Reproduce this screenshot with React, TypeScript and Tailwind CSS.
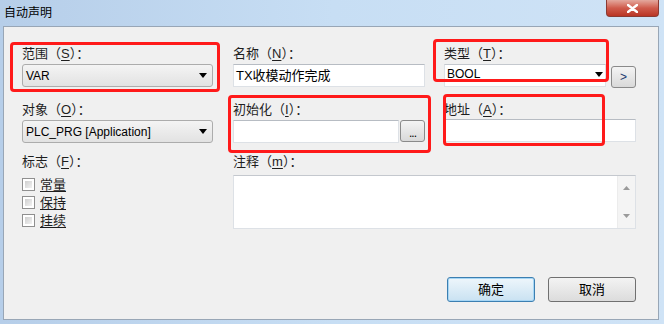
const cjk = "font-['Liberation_Sans','Noto_Sans_CJK_SC',sans-serif]";

function Label({ text, hot }: { text: string; hot: string }) {
  return (
    <div className="h-[17px] text-[13px] leading-[17px] text-[#1e1e1e] whitespace-nowrap">
      {text}（<span className="underline underline-offset-2">{hot}</span>）：
    </div>
  );
}

function Arrow() {
  return (
    <svg width="8" height="5" viewBox="0 0 8 5" className="shrink-0">
      <path d="M0 0h8L4 5z" fill="#000" />
    </svg>
  );
}

function GrayCombo({ value }: { value: string }) {
  return (
    <div className="flex items-center justify-between h-[23px] rounded-[3px] border border-[#acacac] bg-linear-to-b from-[#f4f4f4] to-[#e2e2e2] pl-[3px] pr-[5px] text-[12px] text-black">
      <span>{value}</span>
      <Arrow />
    </div>
  );
}

function TextBox({ value, className = "" }: { value?: string; className?: string }) {
  return (
    <div
      className={`h-[23px] border border-[#dde1e6] border-t-[#b7bcc3] bg-white pl-[2px] text-[13px] leading-[21px] text-black ${className}`}
    >
      {value}
    </div>
  );
}

function SmallButton({ children }: { children: React.ReactNode }) {
  return (
    <div className="flex items-center justify-center w-[25px] h-[22px] rounded-[3px] border border-[#8a8a8a] bg-linear-to-b from-[#f4f4f4] to-[#d9d9d9] text-[12px] text-[#1c3a70]">
      {children}
    </div>
  );
}

function Check({ label }: { label: string }) {
  return (
    <div className="flex items-center h-[18px]">
      <div className="w-[13px] h-[13px] border border-[#8f8f8f] bg-white p-[2px]">
        <div className="w-full h-full bg-linear-to-br from-[#cfcfcf] to-[#f2f2f2]" />
      </div>
      <span className="ml-[5px] text-[13px] leading-[17px] underline underline-offset-2">{label}</span>
    </div>
  );
}

function Mark({ className }: { className: string }) {
  return <div className={`absolute border-[3px] border-[#ff1a1a] rounded-[4px] ${className}`} />;
}

export default function App() {
  return (
    <div className={`relative w-[664px] h-[324px] overflow-hidden bg-linear-to-r from-[#b6cee9] via-[#c7def4] to-[#cfe3f6] ${cjk}`}>
      {/* title bar */}
      <div className="relative h-[26px] flex items-center pl-[4px] text-[12px] text-black">
        自动声明
        <div className="absolute right-[5px] top-0 w-[53px] h-[17px] rounded-b-[4px] border border-t-0 border-[#8b3a32] bg-linear-to-b from-[#e3a89e] via-[#cf5b4c] to-[#b93424] flex items-center justify-center">
          <svg width="11" height="9" viewBox="0 0 11 9">
            <path d="M1 1l9 7M10 1L1 8" stroke="#fff" strokeWidth="2.4" strokeLinecap="round" />
          </svg>
        </div>
      </div>

      {/* client area */}
      <div className="ml-[3px] mr-[5px] h-[294px] border border-[#98a6b6] bg-[#f0f0f0] pt-[18px] pl-[18px] text-[#1e1e1e]">
        {/* row 1 */}
        <div className="flex">
          <div className="w-[191px]">
            <Label text="范围" hot="S" />
            <div className="mt-[2px]">
              <GrayCombo value="VAR" />
            </div>
          </div>
          <div className="w-[192px] ml-[20px]">
            <Label text="名称" hot="N" />
            <TextBox value="TX收模动作完成" className="mt-[2px]" />
          </div>
          <div className="w-[192px] ml-[19px]">
            <Label text="类型" hot="T" />
            <div className="mt-[2px] flex items-start gap-[5px]">
              <div className="flex-1 h-[23px] flex items-center justify-between border border-[#dde1e6] border-t-[#c4c8ce] bg-white pl-[2px] pr-[2px] text-[12px] text-black">
                <span className="-mt-[4px]">BOOL</span>
                <span className="-mt-[3px]">
                  <Arrow />
                </span>
              </div>
              <div className="mt-[2px]">
                <SmallButton>&gt;</SmallButton>
              </div>
            </div>
          </div>
        </div>

        {/* row 2 */}
        <div className="flex mt-[13px]">
          <div className="w-[191px]">
            <Label text="对象" hot="O" />
            <div className="mt-[2px]">
              <GrayCombo value="PLC_PRG [Application]" />
            </div>
          </div>
          <div className="w-[192px] ml-[20px]">
            <Label text="初始化" hot="I" />
            <div className="mt-[2px] flex items-start gap-[1px]">
              <TextBox className="flex-1" />
              <SmallButton>
                <span className="text-black mt-[4px] tracking-[-1px]">...</span>
              </SmallButton>
            </div>
          </div>
          <div className="w-[192px] ml-[19px]">
            <Label text="地址" hot="A" />
            <TextBox className="mt-[1px]" />
          </div>
        </div>

        {/* row 3 */}
        <div className="flex mt-[10px]">
          <div className="w-[191px]">
            <Label text="标志" hot="F" />
            <div className="mt-[5px] flex flex-col">
              <Check label="常量" />
              <Check label="保持" />
              <Check label="挂续" />
            </div>
          </div>
          <div className="w-[403px] ml-[20px]">
            <Label text="注释" hot="m" />
            <div className="mt-[5px] h-[54px] flex border border-[#dde1e6] border-t-[#c4c8ce] bg-white">
              <div className="flex-1" />
              <div className="w-[18px] bg-[#f4f4f4] border-l border-[#ececec] flex flex-col items-center justify-between py-[10px]">
                <svg width="7" height="4" viewBox="0 0 7 4">
                  <path d="M0 4h7L3.5 0z" fill="#9a9a9a" />
                </svg>
                <svg width="7" height="4" viewBox="0 0 7 4">
                  <path d="M0 0h7L3.5 4z" fill="#9a9a9a" />
                </svg>
              </div>
            </div>
          </div>
        </div>

        {/* buttons */}
        <div className="flex justify-end gap-[13px] mt-[48px] pr-[22px]">
          <div className="w-[88px] h-[25px] rounded-[3px] border border-[#3c7fb1] bg-linear-to-b from-[#eef6fb] to-[#c9e2f2] shadow-[inset_0_0_0_1px_#a6d6f5] flex items-center justify-center text-[13px] text-black">
            确定
          </div>
          <div className="w-[88px] h-[25px] rounded-[3px] border border-[#707070] bg-linear-to-b from-[#f3f3f3] to-[#dcdcdc] flex items-center justify-center text-[13px] text-black">
            取消
          </div>
        </div>
      </div>

      {/* red annotation frames */}
      <Mark className="left-[10px] top-[42px] w-[210px] h-[50px]" />
      <Mark className="left-[228px] top-[95px] w-[203px] h-[58px]" />
      <Mark className="left-[433px] top-[39px] w-[176px] h-[43px]" />
      <Mark className="left-[443px] top-[94px] w-[162px] h-[52px]" />
    </div>
  );
}
